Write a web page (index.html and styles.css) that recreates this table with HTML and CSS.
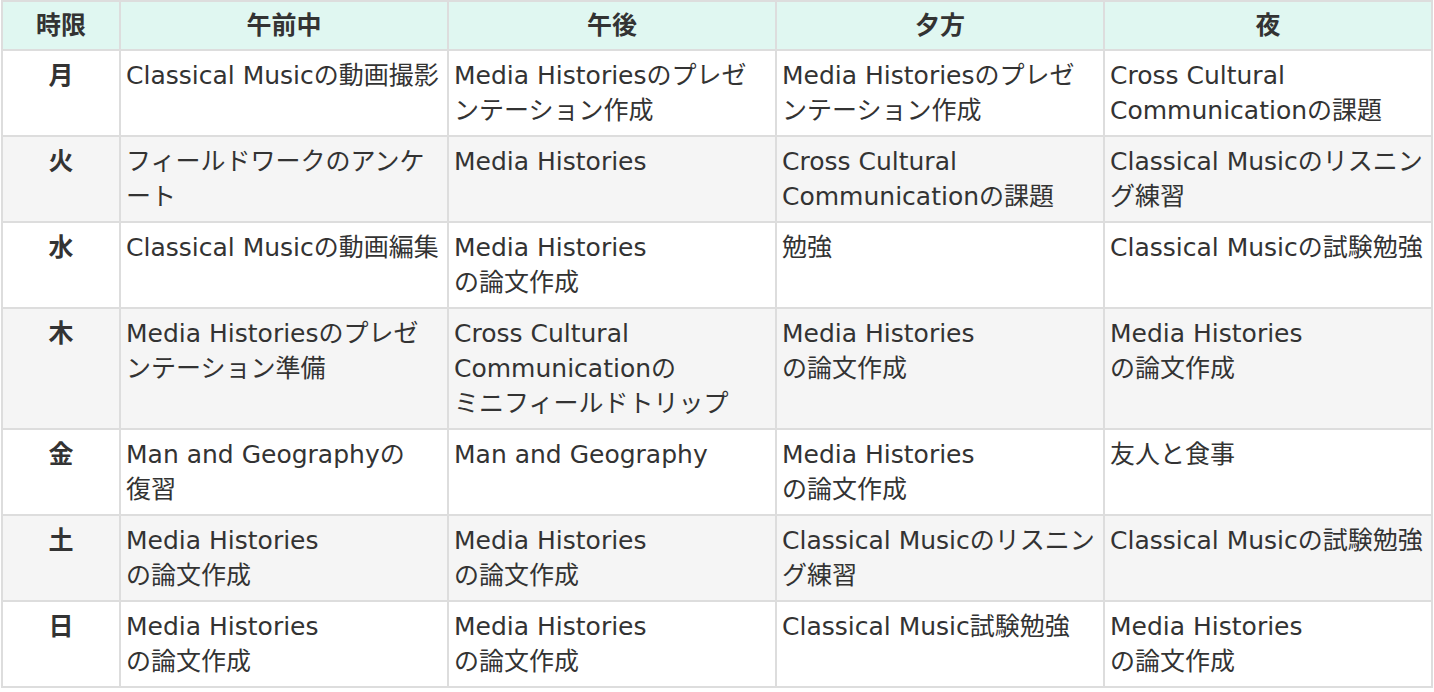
FILE: index.html
```html
<!DOCTYPE html>
<html lang="ja">

<head>
    <meta charset="UTF-8">
    <meta name="viewport" content="width=device-width, initial-scale=1.0">
    <title>週間スケジュール</title>
    <link rel="stylesheet" href="styles.css">
</head>

<body>

    <table class="schedule">
        <colgroup>
            <col class="col-day">
            <col class="col-slot">
            <col class="col-slot">
            <col class="col-slot">
            <col class="col-slot">
        </colgroup>
        <thead>
            <tr>
                <th>時限</th>
                <th>午前中</th>
                <th>午後</th>
                <th>夕方</th>
                <th>夜</th>
            </tr>
        </thead>
        <tbody>
            <tr>
                <td class="day">月</td>
                <td>Classical Musicの動画撮影</td>
                <td>Media Historiesのプレゼンテーション作成</td>
                <td>Media Historiesのプレゼンテーション作成</td>
                <td>Cross Cultural Communicationの課題</td>
            </tr>
            <tr>
                <td class="day">火</td>
                <td>フィールドワークのアンケート</td>
                <td>Media Histories</td>
                <td>Cross Cultural Communicationの課題</td>
                <td>Classical Musicのリスニング練習</td>
            </tr>
            <tr>
                <td class="day">水</td>
                <td>Classical Musicの動画編集</td>
                <td>Media Histories<br>の論文作成</td>
                <td>勉強</td>
                <td>Classical Musicの試験勉強</td>
            </tr>
            <tr>
                <td class="day">木</td>
                <td>Media Historiesのプレゼンテーション準備</td>
                <td>Cross Cultural Communicationの<br>ミニフィールドトリップ</td>
                <td>Media Histories<br>の論文作成</td>
                <td>Media Histories<br>の論文作成</td>
            </tr>
            <tr>
                <td class="day">金</td>
                <td>Man and Geographyの<br>復習</td>
                <td>Man and Geography</td>
                <td>Media Histories<br>の論文作成</td>
                <td>友人と食事</td>
            </tr>
            <tr>
                <td class="day">土</td>
                <td>Media Histories<br>の論文作成</td>
                <td>Media Histories<br>の論文作成</td>
                <td>Classical Musicのリスニング練習</td>
                <td>Classical Musicの試験勉強</td>
            </tr>
            <tr>
                <td class="day">日</td>
                <td>Media Histories<br>の論文作成</td>
                <td>Media Histories<br>の論文作成</td>
                <td>Classical Music試験勉強</td>
                <td>Media Histories<br>の論文作成</td>
            </tr>
        </tbody>
    </table>

</body>

</html>
```

FILE: styles.css
```css
/* Global Styles */
body {
    font-family: 'DejaVu Sans', 'Noto Sans CJK JP', sans-serif;
    background-color: #fff;
    color: #333;
    margin: 0;
    padding: 0;
}

/* Schedule Table */
.schedule {
    width: 1430px;
    margin: 0 1px;
    border-collapse: collapse;
    table-layout: fixed;
    font-size: 25px;
    line-height: 35px;
}

.col-day {
    width: 118px;
}

.col-slot {
    width: 328px;
}

.schedule th,
.schedule td {
    border: 2px solid #dddddd;
    padding: 7px 5px;
    vertical-align: top;
    text-align: left;
}

.schedule th {
    background-color: #e0f7f1;
    font-weight: bold;
    text-align: center;
    padding: 6px 5px;
}

.schedule tbody tr:nth-child(even) {
    background-color: #f5f5f5;
}

.schedule td.day {
    font-weight: bold;
    text-align: center;
}
```
